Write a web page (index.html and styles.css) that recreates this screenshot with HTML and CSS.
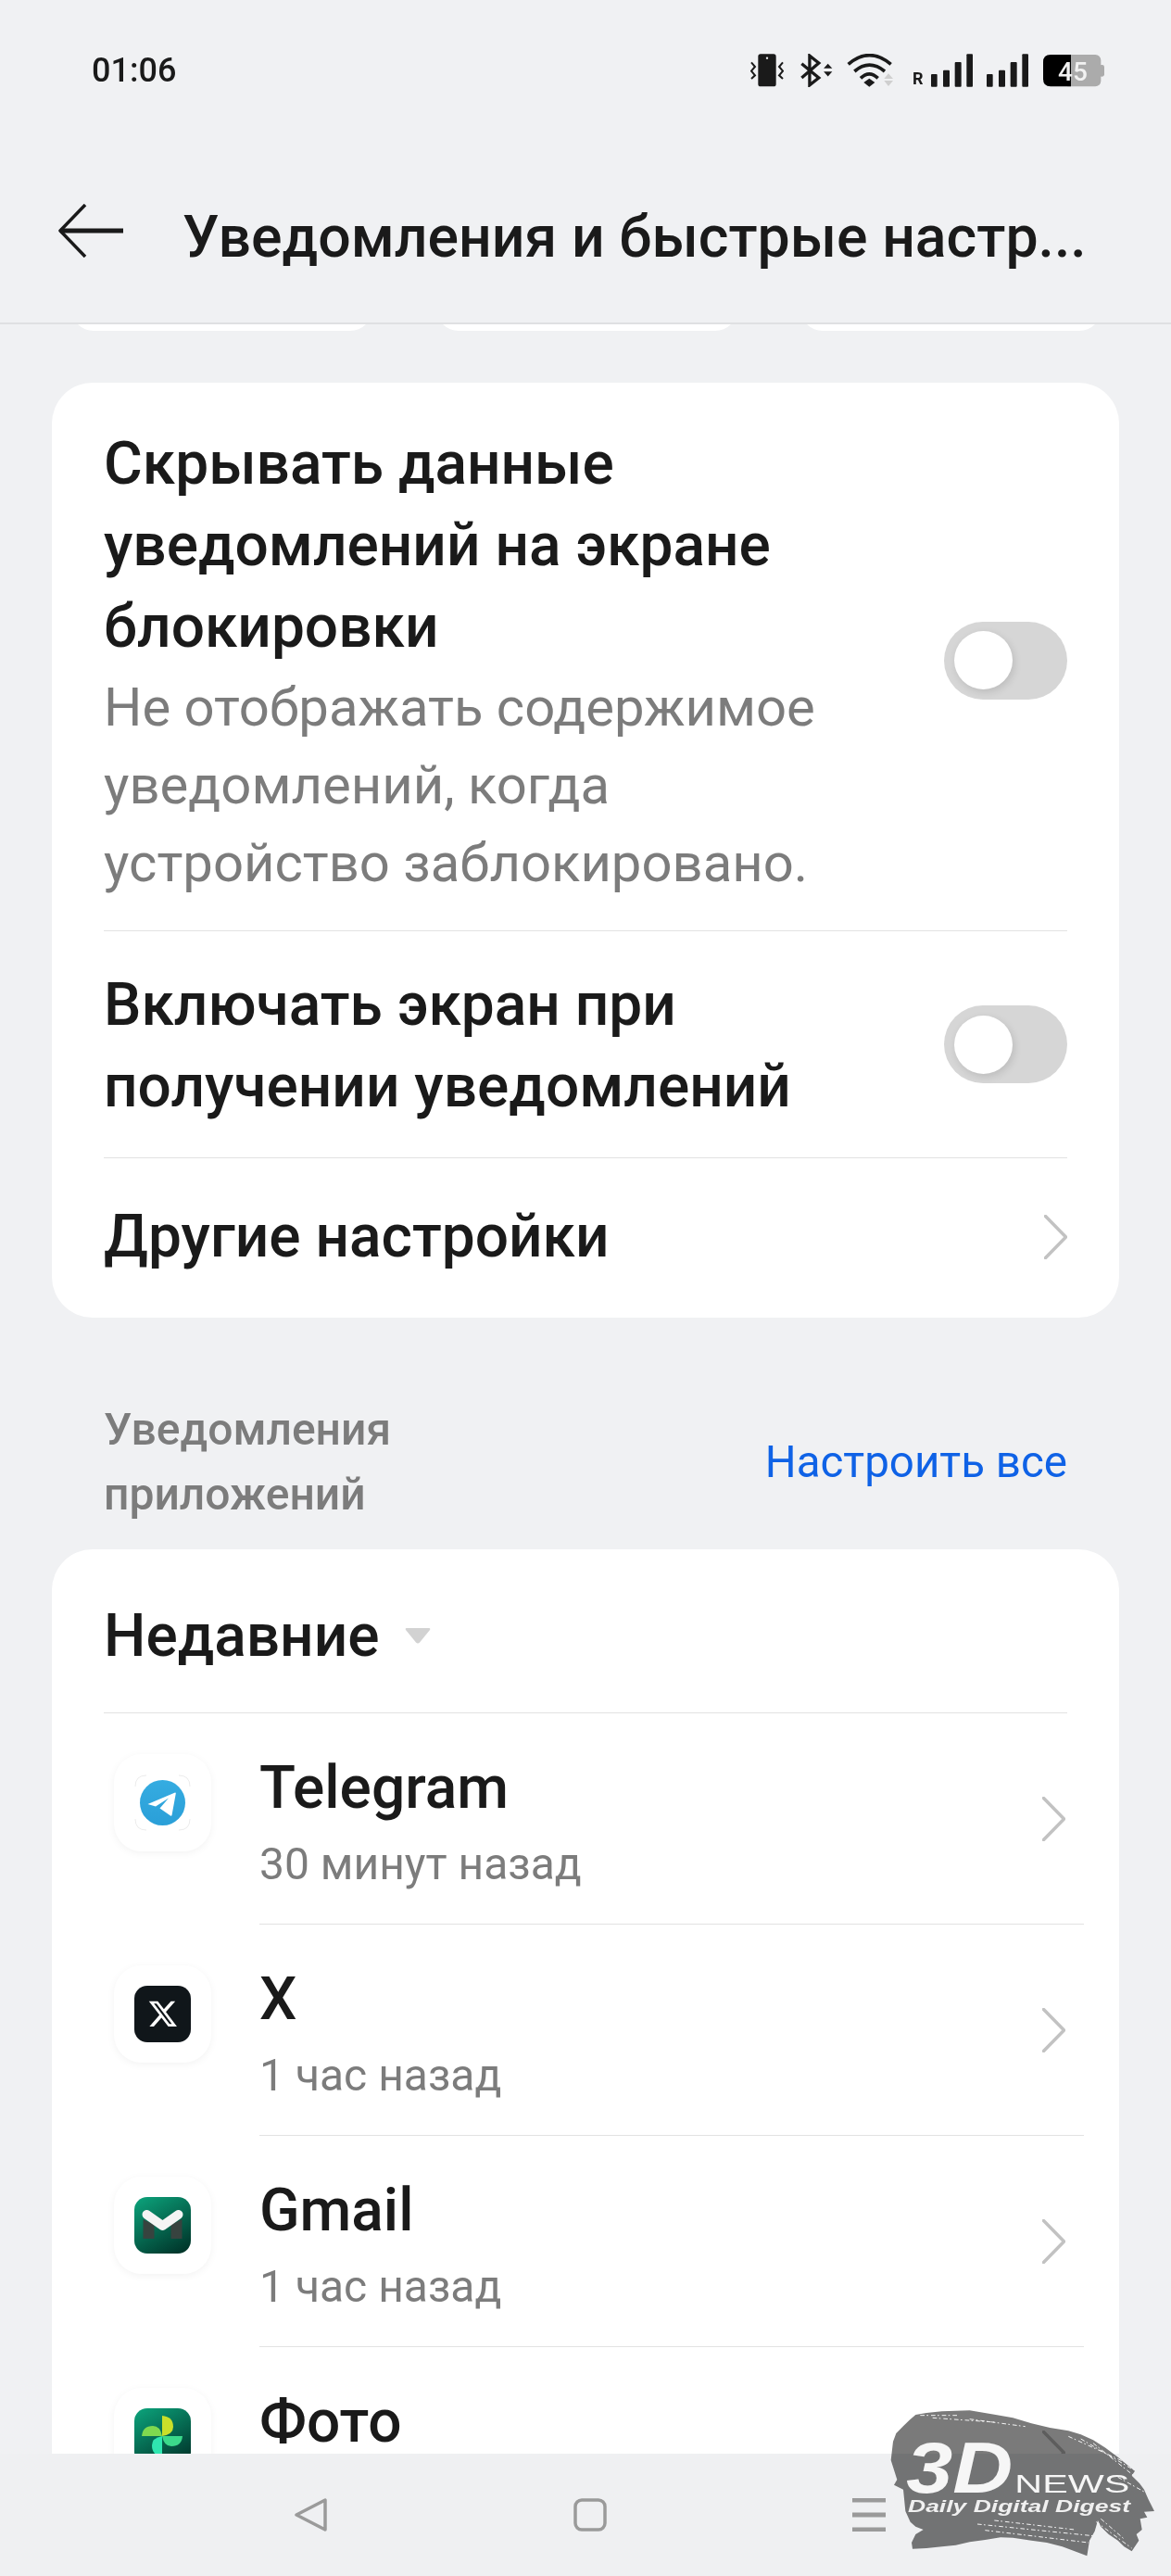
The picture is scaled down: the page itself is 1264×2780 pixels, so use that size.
FILE: index.html
```html
<!DOCTYPE html>
<html lang="ru">
  <head>
    <meta charset="UTF-8" />
    <title>Уведомления и быстрые настройки</title>
    <link rel="stylesheet" href="styles.css">
  </head>
  <body>
    <div class="screen">
      <!-- строка состояния -->
      <div class="status">
        <span class="clock">01:06</span>
        <div class="status-icons">
          <svg class="ic-vibrate" viewBox="150 84 108 108">
            <rect x="175" y="85" width="58" height="105" rx="8" fill="#1a1a1a" />
            <circle cx="204" cy="98" r="3.5" fill="#f0f1f3" />
            <path d="M153 112 L165 126 L153 140 L165 154 L153 165 M255 112 L243 126 L255 140 L243 154 L255 165" fill="none" stroke="#1a1a1a" stroke-width="6" />
          </svg>
          <svg class="ic-bt" viewBox="312 84 106 108">
            <path d="M316 116 L372 162 L342 186 V90 L372 114 L316 162" fill="none" stroke="#1a1a1a" stroke-width="10" />
            <path d="M402 116 L416 131 H388 Z M402 158 L416 142 H388 Z" fill="#1a1a1a" />
          </svg>
          <svg class="ic-wifi" viewBox="462 84 150 108">
            <path d="M467 118 Q535 60 605 118 M487 141 Q535 100 585 141 M507 163 Q535 136 563 163" fill="none" stroke="#1a1a1a" stroke-width="11" />
            <path d="M535 164 L553 177 L535 191 L517 177 Z" fill="#1a1a1a" />
            <path d="M597 148 L612 165 H583 Z M597 189 L612 171 H583 Z" fill="#cfcfcf" />
          </svg>
          <span class="roam">R</span>
          <svg class="ic-signal" viewBox="735 84 135 108">
            <rect x="735" y="150" width="20" height="41" rx="3" />
            <rect x="774" y="137" width="21" height="54" rx="3" />
            <rect x="812" y="111" width="21" height="80" rx="3" />
            <rect x="850" y="85" width="20" height="106" rx="3" />
          </svg>
          <svg class="ic-signal" viewBox="735 84 135 108">
            <rect x="735" y="150" width="20" height="41" rx="3" />
            <rect x="774" y="137" width="21" height="54" rx="3" />
            <rect x="812" y="111" width="21" height="80" rx="3" />
            <rect x="850" y="85" width="20" height="106" rx="3" />
          </svg>
          <svg class="ic-battery" viewBox="1098 84 198 108">
            <rect x="1160" y="87" width="125" height="103" rx="18" fill="#ababab" />
            <rect x="1280" y="120" width="16" height="38" rx="7" fill="#ababab" />
            <path d="M1188 87 H1122 Q1098 87 1098 111 V166 Q1098 190 1122 190 H1188 Z" fill="#000" />
            <text x="1194" y="170" text-anchor="middle" class="battery-num">45</text>
          </svg>
        </div>
      </div>

      <!-- заголовок -->
      <div class="topbar">
        <svg class="back" viewBox="0 0 70 58">
          <path d="M29 1 L2 29 L29 57" fill="none" stroke="#1a1a1a" stroke-width="3.5" stroke-linejoin="round" />
          <path d="M2 29 H70" fill="none" stroke="#1a1a1a" stroke-width="5" />
        </svg>
        <h1 class="page-title">Уведомления и быстрые настр...</h1>
      </div>

      <div class="scroll">
        <div class="tiles">
          <div class="tile"></div>
          <div class="tile"></div>
          <div class="tile"></div>
        </div>

        <div class="card card-options">
          <div class="row row-hide">
            <div class="row-text">
              <div class="row-title">Скрывать данные уведомлений на экране блокировки</div>
              <div class="row-sub">Не отображать содержимое уведомлений, когда устройство заблокировано.</div>
            </div>
            <div class="toggle"><span class="knob"></span></div>
          </div>
          <div class="row row-wake">
            <div class="row-text">
              <div class="row-title">Включать экран при получении уведомлений</div>
            </div>
            <div class="toggle"><span class="knob"></span></div>
          </div>
          <div class="row row-more">
            <div class="row-title">Другие настройки</div>
            <svg class="chevron" viewBox="0 0 25 48"><path d="M1.5 1.5 L23.5 24 L1.5 46.5" /></svg>
          </div>
        </div>

        <div class="section-head">
          <div class="section-title">Уведомления приложений</div>
          <div class="section-link">Настроить все</div>
        </div>

        <div class="card card-apps">
          <div class="recent">
            <span class="recent-label">Недавние</span>
            <svg class="caret" viewBox="0 0 28 17"><path d="M2 0 H26 Q28 0 27 2 L16 15.5 Q14 17.5 12 15.5 L1 2 Q0 0 2 0 Z" /></svg>
          </div>

          <div class="app">
            <div class="app-tile">
              <svg class="app-icon" viewBox="0 0 61 61">
                <defs>
                  <linearGradient id="tgBlue" x1="0" y1="0" x2="0" y2="1">
                    <stop offset="0" stop-color="#35ace1" />
                    <stop offset="1" stop-color="#2a9fd8" />
                  </linearGradient>
                </defs>
                <path d="M1 13 Q1 1 13 1 M48 1 Q60 1 60 13 M60 48 Q60 60 48 60 M13 60 Q1 60 1 48" fill="none" stroke="#ececec" stroke-width="1" />
                <circle cx="30.5" cy="30.5" r="24.5" fill="url(#tgBlue)" />
                <path d="M14.5 32 L44 19.5 Q45 19.5 44.8 20.5 L40.5 44 Q40 45 39 44.4 L27.5 36.5 L37 25.5 L23 34.5 Z" fill="#fff" />
              </svg>
            </div>
            <div class="app-body">
              <div class="app-text">
                <div class="app-name">Telegram</div>
                <div class="app-time">30 минут назад</div>
              </div>
              <svg class="chevron" viewBox="0 0 25 48"><path d="M1.5 1.5 L23.5 24 L1.5 46.5" /></svg>
            </div>
          </div>

          <div class="app">
            <div class="app-tile">
              <svg class="app-icon" viewBox="0 0 61 61">
                <rect width="61" height="61" rx="14" fill="#10161a" />
                <g transform="translate(14 13.5) scale(1.4)">
                  <path d="M18.244 2.25h3.308l-7.227 8.26 8.502 11.24H16.17l-5.214-6.817L4.99 21.75H1.68l7.73-8.835L1.254 2.25H8.08l4.713 6.231zm-1.161 17.52h1.833L7.084 4.126H5.117z" fill="#fff" />
                </g>
              </svg>
            </div>
            <div class="app-body">
              <div class="app-text">
                <div class="app-name">X</div>
                <div class="app-time">1 час назад</div>
              </div>
              <svg class="chevron" viewBox="0 0 25 48"><path d="M1.5 1.5 L23.5 24 L1.5 46.5" /></svg>
            </div>
          </div>

          <div class="app">
            <div class="app-tile">
              <svg class="app-icon" viewBox="0 0 61 61">
                <defs>
                  <linearGradient id="darkGreen" x1="0.2" y1="0" x2="0.8" y2="1">
                    <stop offset="0" stop-color="#0b9c76" />
                    <stop offset="1" stop-color="#00362b" />
                  </linearGradient>
                </defs>
                <rect width="61" height="61" rx="14" fill="url(#darkGreen)" />
                <path d="M9.5 24 L21.5 30 V45 H9.5 Z M51.5 24 L39.5 30 V45 H51.5 Z" fill="#37433f" />
                <path d="M13.5 19 L30.5 31 L47.5 19" fill="none" stroke="#f4f4f4" stroke-width="10" stroke-linecap="round" stroke-linejoin="round" />
              </svg>
            </div>
            <div class="app-body">
              <div class="app-text">
                <div class="app-name">Gmail</div>
                <div class="app-time">1 час назад</div>
              </div>
              <svg class="chevron" viewBox="0 0 25 48"><path d="M1.5 1.5 L23.5 24 L1.5 46.5" /></svg>
            </div>
          </div>

          <div class="app">
            <div class="app-tile">
              <svg class="app-icon" viewBox="0 0 61 61">
                <rect width="61" height="61" rx="14" fill="url(#darkGreen)" />
                <path d="M30 30 V8 Q42 9 42 20 Q42 28 30 30 Z" fill="#c9df2a" />
                <path d="M30 30 H8 Q9 19 20 19 Q28 19 30 30 Z" fill="#7fd94f" />
                <path d="M30 30 H52 Q51 41 40 41 Q32 41 30 30 Z" fill="#3bd98a" />
                <path d="M30 30 V52 Q19 51 19 40 Q19 32 30 30 Z" fill="#2fe6b0" />
              </svg>
            </div>
            <div class="app-body">
              <div class="app-text">
                <div class="app-name">Фото</div>
                <div class="app-time"></div>
              </div>
              <svg class="chevron" viewBox="0 0 25 48"><path d="M1.5 1.5 L23.5 24 L1.5 46.5" /></svg>
            </div>
          </div>
        </div>
      </div>

      <!-- навигация -->
      <div class="navbar">
        <svg class="nav-back" viewBox="0 0 36 36"><path d="M2 18 L33 2 V34 Z" /></svg>
        <svg class="nav-home" viewBox="0 0 36 36"><rect x="2" y="2" width="32" height="32" rx="7" /></svg>
        <svg class="nav-menu" viewBox="0 0 36 36"><path d="M0 2 H36 M0 18 H36 M0 34 H36" /></svg>
      </div>

      <!-- водяной знак -->
      <svg class="watermark" viewBox="0 0 1212 720">
        <path class="wm-brush" d="M385 198 L420 192 L470 187 L560 184 L640 197 L700 208 L760 226 L820 240 L880 250 L920 262 L960 280 L1000 305 L1040 335 L1070 360 L1095 380 L1085 395 L1110 420 L1125 440 L1138 470 L1158 510 L1125 512 L1135 530 L1112 535 L1118 570 L1100 585 L1108 605 L1085 640 L1060 625 L1040 605 L1010 585 L985 560 L975 540 L965 575 L948 605 L940 655 L900 640 L860 625 L810 612 L760 605 L700 596 L660 595 L610 603 L560 610 L515 620 L470 625 L420 630 L375 632 L372 612 L385 585 L410 570 L385 560 L368 545 L352 510 L348 470 L345 440 L315 425 L325 408 L305 345 L312 285 L322 258 L345 235 L365 215 Z" />
        <path class="wm-streak" d="M400 200 H520 M440 208 L640 222 M560 212 L740 236 M880 268 L1060 350 M920 276 L1090 376 M960 290 L1110 410 M1040 400 L1130 450 M970 545 L1085 630 M985 535 L1060 600 M585 552 L960 590 M610 572 L945 612 M640 540 L900 570" />
        <text class="wm-big" x="355" y="450" textLength="345" lengthAdjust="spacingAndGlyphs">3D</text>
        <text class="wm-news" x="706" y="450" textLength="372" lengthAdjust="spacingAndGlyphs">NEWS</text>
        <text class="wm-tag" x="360" y="512" textLength="720" lengthAdjust="spacingAndGlyphs">Daily Digital Digest</text>
      </svg>
    </div>
  </body>
</html>
```

FILE: styles.css
```css
* {
  box-sizing: border-box;
}

html, body {
  margin: 0;
  padding: 0;
}

body {
  background: #f0f1f3;
  color: #1a1a1a;
  font-family: Roboto, "Noto Sans", sans-serif;
}

.screen {
  position: relative;
  display: flex;
  flex-direction: column;
  width: 1264px;
  height: 2780px;
  overflow: hidden;
}

/* строка состояния */
.status {
  display: flex;
  justify-content: space-between;
  align-items: center;
  height: 150px;
  padding: 2px 72px 0 99px;
}

.clock {
  font-size: 36px;
  font-weight: 500;
}

.status-icons {
  display: flex;
  align-items: flex-end;
  height: 36px;
}

.status-icons svg {
  display: block;
  height: 36px;
}

.ic-vibrate {
  width: 36px;
}

.ic-bt {
  width: 35px;
  margin-left: 18px;
}

.ic-wifi {
  width: 50px;
  margin-left: 15px;
}

.roam {
  width: 12px;
  margin-left: 21px;
  font-size: 18px;
  font-weight: 700;
  line-height: 18px;
}

.status-icons .ic-signal {
  width: 45px;
  margin-left: 8px;
  fill: #1a1a1a;
}

.status-icons .ic-signal + .ic-signal {
  margin-left: 15px;
}

.ic-battery {
  width: 66px;
  margin-left: 16px;
}

.battery-num {
  fill: #f2f2f2;
  font-size: 84px;
  font-weight: 500;
}

/* заголовок */
.topbar {
  display: flex;
  align-items: center;
  height: 200px;
  padding: 0 60px 0 63px;
  border-bottom: 2px solid #dfe0e2;
}

.back {
  flex: none;
  width: 70px;
  height: 58px;
  margin: 0 64px 0 0;
}

.page-title {
  flex: 1;
  min-width: 0;
  margin: 0;
  padding-top: 12px;
  font-size: 62.6px;
  font-weight: 500;
  white-space: nowrap;
}

.scroll {
  flex: 1;
  min-height: 0;
  overflow: hidden;
}

.tiles {
  display: flex;
  justify-content: space-between;
  align-items: flex-end;
  height: 7px;
  padding: 0 75px 0 77px;
  overflow: hidden;
}

.tile {
  flex: none;
  width: 325px;
  height: 60px;
  background: #fff;
  border-radius: 24px;
}

/* карточки */
.card {
  margin: 56px 56px 0;
  padding: 0 56px;
  background: #fff;
  border-radius: 44px;
}

.row {
  display: flex;
  justify-content: space-between;
  align-items: center;
  border-top: 1px solid #e2e2e2;
}

.row:first-child {
  border-top: none;
}

.row-hide {
  height: 591px;
  padding-top: 8px;
}

.row-hide .row-text {
  padding-top: 4px;
}

.row-wake {
  height: 245px;
}

.row-wake .row-text {
  padding-top: 3px;
}

.row-more {
  height: 173px;
  padding-bottom: 3px;
}

.row-text {
  width: 780px;
}

.row-title {
  font-size: 64px;
  font-weight: 500;
  line-height: 88px;
}

.row-sub {
  color: #7c7c7c;
  font-size: 58px;
  line-height: 84px;
}

.toggle {
  flex: none;
  display: flex;
  align-items: center;
  width: 133px;
  height: 84px;
  padding-left: 11px;
  background: #d6d6d6;
  border-radius: 42px;
}

.knob {
  width: 63px;
  height: 63px;
  background: #fff;
  border-radius: 50%;
  box-shadow: 2px 3px 8px rgba(0, 0, 0, 0.12);
}

.chevron {
  flex: none;
  width: 25px;
  height: 48px;
  fill: none;
  stroke: #c2c2c2;
  stroke-width: 3.5;
  stroke-linecap: round;
}

.section-head {
  display: flex;
  justify-content: space-between;
  align-items: center;
  margin: 0 112px;
  height: 250px;
  padding-top: 62px;
}

.section-title {
  width: 340px;
  color: #7c7c7c;
  font-size: 48px;
  font-weight: 500;
  line-height: 70px;
}

.section-link {
  color: #0f62e6;
  font-size: 47.5px;
}

.card-apps {
  margin-top: 0;
  padding-bottom: 200px;
}

.recent {
  display: flex;
  align-items: center;
  height: 177px;
  padding-top: 11px;
  border-bottom: 1px solid #e2e2e2;
}

.recent-label {
  font-size: 64px;
  font-weight: 500;
}

.caret {
  width: 28px;
  height: 17px;
  margin-left: 28px;
  fill: #d2d2d2;
}

.app {
  display: flex;
  align-items: flex-start;
  height: 228px;
}

.app-tile {
  flex: none;
  display: flex;
  justify-content: center;
  align-items: center;
  width: 105px;
  height: 105px;
  margin: 44px 52px 0 11px;
  background: #fff;
  border-radius: 30px;
  box-shadow: 0 2px 8px rgba(0, 0, 0, 0.05);
}

.app-icon {
  display: block;
  width: 61px;
  height: 61px;
}

.app-body {
  flex: 1;
  display: flex;
  justify-content: space-between;
  align-items: center;
  height: 228px;
  margin-right: -18px;
  padding-right: 20px;
  border-bottom: 1px solid #e2e2e2;
}

.app-text {
  padding-top: 8px;
}

.app-name {
  font-size: 64px;
  font-weight: 500;
  line-height: 90px;
}

.app-time {
  min-height: 74px;
  color: #7c7c7c;
  font-size: 48px;
  line-height: 74px;
}

/* навигация */
.navbar {
  display: flex;
  justify-content: space-between;
  align-items: center;
  height: 132px;
  padding: 0 308px 0 318px;
  background: #eff0f2;
  fill: none;
  stroke: #9a9a9a;
  stroke-width: 3.5;
}

.navbar svg {
  width: 36px;
  height: 36px;
}

.nav-back path {
  stroke-linejoin: round;
}

.nav-menu {
  stroke-width: 5;
}

/* водяной знак */
.watermark {
  position: absolute;
  left: 860px;
  top: 2540px;
  width: 404px;
  height: 240px;
}

.wm-brush {
  fill: #7a7a7a;
  mix-blend-mode: multiply;
}

.wm-streak {
  fill: none;
  stroke: #f4f4f4;
  stroke-width: 3;
  stroke-dasharray: 14 7 5 9;
}

.wm-big {
  fill: #f6f6f6;
  font-family: "Liberation Sans", sans-serif;
  font-size: 232px;
  font-weight: 700;
  font-style: italic;
}

.wm-news {
  fill: #f6f6f6;
  font-family: "Liberation Sans", sans-serif;
  font-size: 82px;
}

.wm-tag {
  fill: #f0f0f0;
  font-family: "Liberation Sans", sans-serif;
  font-size: 56px;
  font-weight: 700;
  font-style: italic;
}
```
